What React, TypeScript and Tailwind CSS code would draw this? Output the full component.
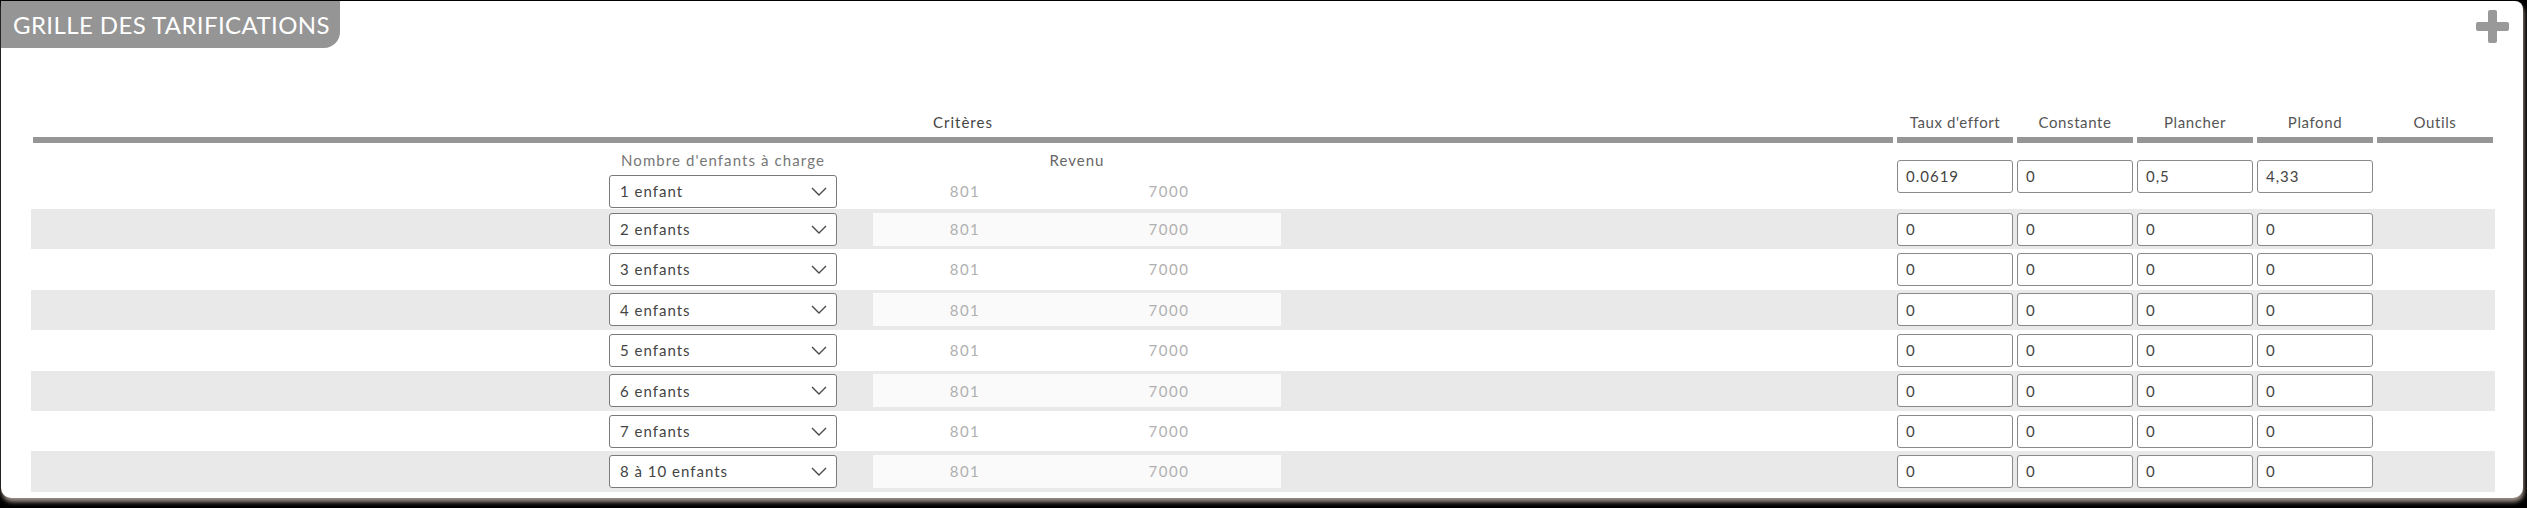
import React from "react";

const rows = [
  { label: "1 enfant", values: ["0.0619", "0", "0,5", "4,33"] },
  { label: "2 enfants", values: ["0", "0", "0", "0"] },
  { label: "3 enfants", values: ["0", "0", "0", "0"] },
  { label: "4 enfants", values: ["0", "0", "0", "0"] },
  { label: "5 enfants", values: ["0", "0", "0", "0"] },
  { label: "6 enfants", values: ["0", "0", "0", "0"] },
  { label: "7 enfants", values: ["0", "0", "0", "0"] },
  { label: "8 à 10 enfants", values: ["0", "0", "0", "0"] },
];

const numCols = ["Taux d'effort", "Constante", "Plancher", "Plafond", "Outils"];

function Chevron() {
  return (
    <svg width="16" height="9" viewBox="0 0 16 9" className="shrink-0">
      <path d="M1 1 L8 8 L15 1" fill="none" stroke="#4a4a4a" strokeWidth="1.4" />
    </svg>
  );
}

function Select({ label }: { label: string }) {
  return (
    <div className="w-[228px] h-[33px] border border-[#7a7a7a] rounded-[3px] bg-white flex items-center justify-between pl-[10px] pr-[9px] text-[15px] tracking-[1px] text-[#444]">
      <span>{label}</span>
      <Chevron />
    </div>
  );
}

function Revenue({ shaded }: { shaded: boolean }) {
  return (
    <div
      className={
        "w-[408px] h-[33px] flex items-center text-[15px] tracking-[1.5px] text-[#b0b0b0] " +
        (shaded ? "bg-[#fafafa]" : "bg-transparent")
      }
    >
      <span className="w-[204px] pr-[20px] text-center">801</span>
      <span className="w-[204px] pr-[20px] text-center">7000</span>
    </div>
  );
}

function NumInput({ value }: { value: string }) {
  return (
    <div className="w-[120px] px-[2px]">
      <div className="w-[116px] h-[33px] border border-[#8a8a8a] rounded-[3px] bg-white flex items-center px-[8px] text-[15px] tracking-[1px] text-[#444]">
        {value}
      </div>
    </div>
  );
}

export default function App() {
  return (
    <div
      className="w-[2527px] h-[508px] bg-black pt-px pl-px overflow-hidden"
      style={{ fontFamily: "Lato, 'Liberation Sans', sans-serif" }}
    >
      <div className="relative w-[2522px] h-[497px] bg-white rounded-tr-[8px] rounded-b-[10px] shadow-[1px_4px_4px_#9a8d85]">
        <div className="flex justify-between items-start">
          <div className="h-[47px] w-[339px] bg-[#959595] rounded-br-[16px] flex items-center pl-[12px] text-white text-[24px] tracking-[0.4px] leading-none">
            GRILLE DES TARIFICATIONS
          </div>
          <svg width="33" height="33" viewBox="0 0 33 33" className="mt-[9px] mr-[14px]">
            <rect x="12" y="0" width="9" height="33" rx="2" fill="#999" />
            <rect x="0" y="12" width="33" height="9" rx="2" fill="#999" />
          </svg>
        </div>

        <div className="ml-[30px] mt-[64px] w-[2464px]">
          {/* header */}
          <div className="flex">
            <div className="w-[1864px] px-[2px]">
              <div className="h-[20px] leading-[20px] text-center text-[15px] tracking-[1px] text-[#444]">Critères</div>
              <div className="mt-[5px] h-[6px] bg-[#969696]" />
            </div>
            {numCols.map((c) => (
              <div key={c} className="w-[120px] px-[2px]">
                <div className="h-[20px] leading-[20px] text-center text-[15px] tracking-[0.6px] text-[#555] whitespace-nowrap">{c}</div>
                <div className="mt-[5px] h-[6px] bg-[#969696]" />
              </div>
            ))}
          </div>

          {/* rows */}
          {rows.map((r, i) => {
            const first = i === 0;
            const shaded = i % 2 === 1;
            return (
              <div
                key={r.label}
                className={
                  "flex items-center " +
                  (first ? "h-[66px] " : "h-[40.4px] ") +
                  (shaded ? "bg-[#e9e9e9]" : "bg-white")
                }
              >
                <div className="w-[1864px] pl-[578px] flex items-end gap-[36px] self-stretch">
                  {first ? (
                    <>
                      <div className="flex flex-col pb-px">
                        <div className="h-[20px] leading-[20px] text-center text-[15px] tracking-[1.1px] text-[#777] mb-[5px] whitespace-nowrap">
                          Nombre d'enfants à charge
                        </div>
                        <Select label={r.label} />
                      </div>
                      <div className="flex flex-col pb-px">
                        <div className="h-[20px] leading-[20px] text-center text-[15px] tracking-[1px] text-[#666] mb-[5px]">
                          Revenu
                        </div>
                        <Revenue shaded={false} />
                      </div>
                    </>
                  ) : (
                    <div className="flex items-center gap-[36px] self-center">
                      <Select label={r.label} />
                      <Revenue shaded={shaded} />
                    </div>
                  )}
                </div>
                {r.values.map((v, j) => (
                  <NumInput key={j} value={v} />
                ))}
                <div className="w-[120px]" />
              </div>
            );
          })}
        </div>
      </div>
    </div>
  );
}
